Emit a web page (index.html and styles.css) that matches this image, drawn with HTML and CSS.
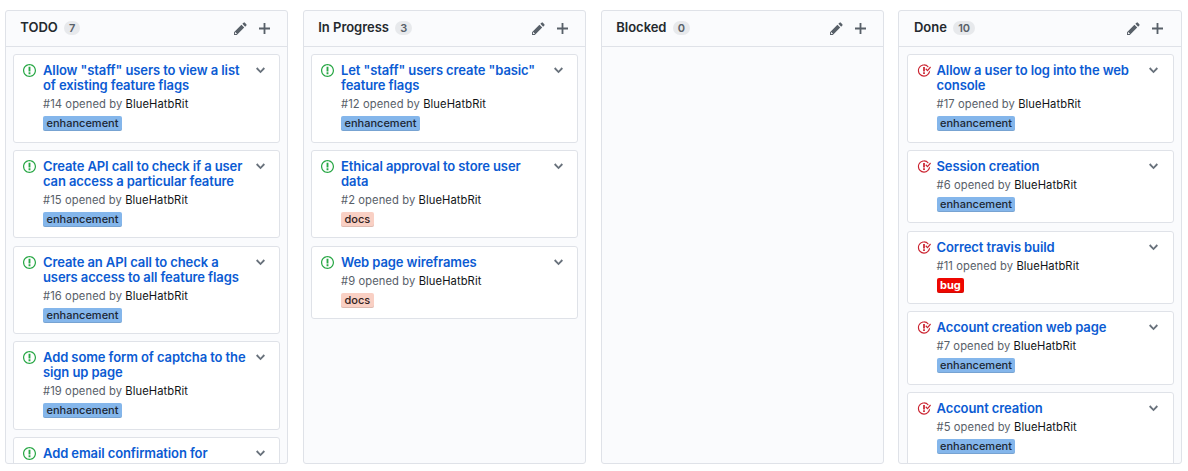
FILE: index.html
```html
<!DOCTYPE html>
<html lang="en">
<head>
<meta charset="utf-8">
<title>Project board</title>
<link rel="stylesheet" href="styles.css">
</head>
<body>
<svg class="sprite" aria-hidden="true">
  <symbol id="pencil" viewBox="0 0 14 16"><path fill-rule="evenodd" d="M0 12v3h3l8-8-3-3-8 8zm3 2H1v-2h1v1h1v1zm10.3-9.3L12 6 9 3l1.3-1.3a.996.996 0 0 1 1.41 0l1.59 1.59c.39.39.39 1.02 0 1.41z"/></symbol>
  <symbol id="plus" viewBox="0 0 12 16"><path d="M12 9H7v5H5V9H0V7h5V2h2v5h5v2z"/></symbol>
  <symbol id="chevron" viewBox="0 0 10 16"><path d="M5 11L0 6l1.5-1.5L5 8.25 8.5 4.5 10 6l-5 5z"/></symbol>
  <symbol id="opened" viewBox="0 0 14 16"><path fill-rule="evenodd" d="M7 2.3c3.14 0 5.7 2.56 5.7 5.7s-2.56 5.7-5.7 5.7A5.71 5.71 0 0 1 1.3 8c0-3.14 2.56-5.7 5.7-5.7zM7 1C3.14 1 0 4.14 0 8s3.14 7 7 7 7-3.14 7-7-3.14-7-7-7zm1 3H6v5h2V4zm0 6H6v2h2v-2z"/></symbol>
  <symbol id="closed" viewBox="0 0 16 16"><path fill-rule="evenodd" d="M7 10h2v2H7v-2zm2-6H7v5h2V4zm1.5 1.5l-1 1L12 9l4-4.5-1-1L12 7l-1.5-1.5zM8 13.7A5.71 5.71 0 0 1 2.3 8c0-3.14 2.56-5.7 5.7-5.7 1.83 0 3.45.88 4.5 2.2l.92-.92A6.947 6.947 0 0 0 8 1C4.14 1 1 4.14 1 8s3.14 7 7 7 7-3.14 7-7l-1.52 1.52c-.66 2.41-2.86 4.19-5.48 4.19v-.01z"/></symbol>
</svg>
<main class="board">
  <section class="column">
    <header class="column-header"><h2 class="column-name">TODO</h2><span class="counter">7</span><svg class="pencil"><use href="#pencil"/></svg><svg class="plus"><use href="#plus"/></svg></header>
    <div class="cards">
      <article class="card"><svg class="opened"><use href="#opened"/></svg><div class="body"><h3 class="title">Allow "staff" users to view a list<br>of existing feature flags</h3><p class="meta">#14 opened by <b class="author">BlueHatbRit</b></p><span class="label enhancement">enhancement</span></div><svg class="chevron"><use href="#chevron"/></svg></article>
      <article class="card"><svg class="opened"><use href="#opened"/></svg><div class="body"><h3 class="title">Create API call to check if a user<br>can access a particular feature</h3><p class="meta">#15 opened by <b class="author">BlueHatbRit</b></p><span class="label enhancement">enhancement</span></div><svg class="chevron"><use href="#chevron"/></svg></article>
      <article class="card"><svg class="opened"><use href="#opened"/></svg><div class="body"><h3 class="title">Create an API call to check a<br>users access to all feature flags</h3><p class="meta">#16 opened by <b class="author">BlueHatbRit</b></p><span class="label enhancement">enhancement</span></div><svg class="chevron"><use href="#chevron"/></svg></article>
      <article class="card"><svg class="opened"><use href="#opened"/></svg><div class="body"><h3 class="title">Add some form of captcha to the<br>sign up page</h3><p class="meta">#19 opened by <b class="author">BlueHatbRit</b></p><span class="label enhancement">enhancement</span></div><svg class="chevron"><use href="#chevron"/></svg></article>
      <article class="card"><svg class="opened"><use href="#opened"/></svg><div class="body"><h3 class="title">Add email confirmation for</h3></div><svg class="chevron"><use href="#chevron"/></svg></article>
    </div>
  </section>
  <section class="column">
    <header class="column-header"><h2 class="column-name">In Progress</h2><span class="counter">3</span><svg class="pencil"><use href="#pencil"/></svg><svg class="plus"><use href="#plus"/></svg></header>
    <div class="cards">
      <article class="card"><svg class="opened"><use href="#opened"/></svg><div class="body"><h3 class="title">Let "staff" users create "basic"<br>feature flags</h3><p class="meta">#12 opened by <b class="author">BlueHatbRit</b></p><span class="label enhancement">enhancement</span></div><svg class="chevron"><use href="#chevron"/></svg></article>
      <article class="card"><svg class="opened"><use href="#opened"/></svg><div class="body"><h3 class="title">Ethical approval to store user<br>data</h3><p class="meta">#2 opened by <b class="author">BlueHatbRit</b></p><span class="label docs">docs</span></div><svg class="chevron"><use href="#chevron"/></svg></article>
      <article class="card"><svg class="opened"><use href="#opened"/></svg><div class="body"><h3 class="title">Web page wireframes</h3><p class="meta">#9 opened by <b class="author">BlueHatbRit</b></p><span class="label docs">docs</span></div><svg class="chevron"><use href="#chevron"/></svg></article>
    </div>
  </section>
  <section class="column">
    <header class="column-header"><h2 class="column-name">Blocked</h2><span class="counter">0</span><svg class="pencil"><use href="#pencil"/></svg><svg class="plus"><use href="#plus"/></svg></header>
    <div class="cards"></div>
  </section>
  <section class="column column-done">
    <header class="column-header"><h2 class="column-name">Done</h2><span class="counter">10</span><svg class="pencil"><use href="#pencil"/></svg><svg class="plus"><use href="#plus"/></svg></header>
    <div class="cards">
      <article class="card"><svg class="closed"><use href="#closed"/></svg><div class="body"><h3 class="title">Allow a user to log into the web<br>console</h3><p class="meta">#17 opened by <b class="author">BlueHatbRit</b></p><span class="label enhancement">enhancement</span></div><svg class="chevron"><use href="#chevron"/></svg></article>
      <article class="card"><svg class="closed"><use href="#closed"/></svg><div class="body"><h3 class="title">Session creation</h3><p class="meta">#6 opened by <b class="author">BlueHatbRit</b></p><span class="label enhancement">enhancement</span></div><svg class="chevron"><use href="#chevron"/></svg></article>
      <article class="card"><svg class="closed"><use href="#closed"/></svg><div class="body"><h3 class="title">Correct travis build</h3><p class="meta">#11 opened by <b class="author">BlueHatbRit</b></p><span class="label bug">bug</span></div><svg class="chevron"><use href="#chevron"/></svg></article>
      <article class="card"><svg class="closed"><use href="#closed"/></svg><div class="body"><h3 class="title">Account creation web page</h3><p class="meta">#7 opened by <b class="author">BlueHatbRit</b></p><span class="label enhancement">enhancement</span></div><svg class="chevron"><use href="#chevron"/></svg></article>
      <article class="card"><svg class="closed"><use href="#closed"/></svg><div class="body"><h3 class="title">Account creation</h3><p class="meta">#5 opened by <b class="author">BlueHatbRit</b></p><span class="label enhancement">enhancement</span></div><svg class="chevron"><use href="#chevron"/></svg></article>
    </div>
  </section>
</main>
</body>
</html>
```
FILE: styles.css
```css
* { box-sizing: border-box; }
body { margin: 0; background: #fff; font-family: Inter, "Liberation Sans", sans-serif; color: #24292e; overflow: hidden; }
.sprite { display: none; }
.board { display: flex; gap: 15px; padding: 10px 0 0 5px; }
.column { flex: none; width: 283px; height: 454px; border: 1px solid #dfe2e8; border-radius: 3px; background: #fafbfd; overflow: hidden; }
.column-header { display: flex; align-items: center; height: 36px; padding: 0 17.5px 0 14.3px; border-bottom: 1px solid #dfe2e8; }
.column-name { margin: -3px 0 0; font-size: 13px; line-height: 20px; font-weight: 600; letter-spacing: -0.03px; }
.counter { margin: -1px auto 0 6.3px; padding: 0 5px; min-width: 16px; height: 14px; border-radius: 7px; background: #e7e9ec; color: #586069; font-size: 11px; line-height: 14px; font-weight: 600; text-align: center; }
svg { flex: none; fill: currentColor; }
.pencil, .plus { color: #586069; }
.pencil { width: 13px; height: 15px; margin-right: 12px; }
.plus { width: 11px; height: 15px; }
.cards { padding: 7px; display: flex; flex-direction: column; gap: 7.3px; }
.card { flex: none; display: flex; width: 267px; padding: 8px 14px 10.5px 9px; border: 1px solid #dfe2e8; border-radius: 3px; background: #fff; }
.opened { width: 13px; height: 15px; margin-right: 7px; color: #28a745; }
.closed { width: 14px; height: 15px; margin-right: 5.5px; color: #cb2431; }
.body { flex: 1; white-space: nowrap; }
.title { margin: 0; font-size: 13px; line-height: 15px; font-weight: 600; letter-spacing: -0.1px; color: #0b5bd3; }
.meta { margin: 4px 0 5px; font-size: 11.2px; line-height: 14px; letter-spacing: 0.09px; color: #586069; }
.author { font-weight: 400; color: #111417; }
.label { display: block; width: max-content; height: 15px; padding: 0 3.5px; border-radius: 2px; box-shadow: inset 0 -1px 0 rgba(27,31,35,.12); font-size: 11px; line-height: 15px; font-weight: 500; }
.enhancement { background: #84b6eb; color: #1c2733; }
.docs { background: #f9d0c4; color: #30201c; }
.bug { background: #ee0701; color: #fff; font-weight: 700; }
.chevron { width: 9px; height: 15px; color: #6a737d; }
.column-done { width: 284px; margin-left: -1px; }
.column-done .cards { padding-left: 8px; }
.column-done .column-header { padding: 0 18px 0 15px; }
.column-done .card { padding-right: 15px; }
```
